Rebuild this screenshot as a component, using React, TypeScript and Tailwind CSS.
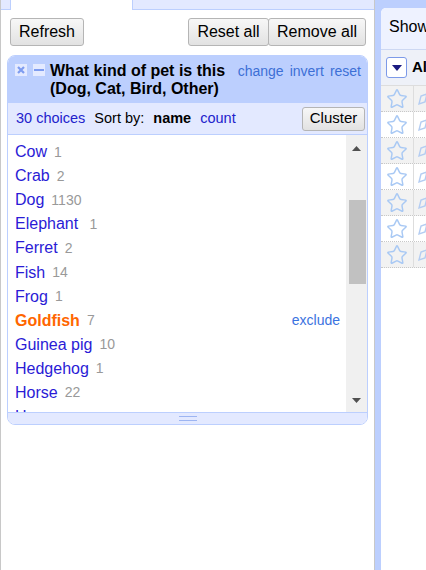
import React from "react";
import { Star } from "lucide-react";

const choices = [
  { name: "Cow", count: 1 },
  { name: "Crab", count: 2 },
  { name: "Dog", count: 1130 },
  { name: "Elephant\u00a0", count: 1 },
  { name: "Ferret", count: 2 },
  { name: "Fish", count: 14 },
  { name: "Frog", count: 1 },
  { name: "Goldfish", count: 7, selected: true },
  { name: "Guinea pig", count: 10 },
  { name: "Hedgehog", count: 1 },
  { name: "Horse", count: 22 },
  { name: "Human", count: 3 },
];

const Btn = ({ children, className = "" }: { children: React.ReactNode; className?: string }) => (
  <div
    className={`flex items-center justify-center h-[28px] border border-[#b5b5b5] rounded-[3px] bg-gradient-to-b from-[#f7f7f7] to-[#e2e2e2] text-[16px] text-black ${className}`}
  >
    {children}
  </div>
);

const FacetPanel = () => (
  <div className="ml-[6px] mt-[9px] w-[361px] border border-[#bccffe] rounded-[8px] overflow-hidden flex flex-col">
    {/* header */}
    <div className="h-[47px] bg-[#bccffe] flex pl-[7px] pt-[6px] pr-[6px]">
      <svg width="12" height="12" viewBox="0 0 12 12" className="mt-[2px] shrink-0">
        <rect width="12" height="12" fill="#e4eaff" />
        <path d="M3 3L9 9M9 3L3 9" stroke="#7e9cf0" strokeWidth="2.2" />
      </svg>
      <svg width="12" height="12" viewBox="0 0 12 12" className="mt-[2px] ml-[6px] shrink-0">
        <rect width="12" height="12" fill="#e4eaff" />
        <rect x="1" y="5" width="10" height="2" fill="#7e9cf0" />
      </svg>
      <div className="ml-[5px] w-[184px] text-[16px] font-bold leading-[18px] text-black">
        What kind of pet is this (Dog, Cat, Bird, Other)
      </div>
      <div className="ml-auto flex gap-[6px] text-[14px] leading-[18px] text-[#3d6fd6]">
        <span>change</span>
        <span>invert</span>
        <span>reset</span>
      </div>
    </div>

    {/* sub header */}
    <div className="h-[32px] bg-[#e3e9ff] border-b border-[#bccffe] flex items-center pl-[8px] pr-[2px] text-[14.5px]">
      <span className="text-[#2222cc]">30 choices</span>
      <span className="ml-[9px] text-black">Sort by:</span>
      <span className="ml-[9px] font-bold text-black">name</span>
      <span className="ml-[9px] text-[#2222cc]">count</span>
      <div className="ml-auto flex items-center justify-center h-[24px] w-[63px] border border-[#b5b5b5] rounded-[3px] bg-gradient-to-b from-[#f7f7f7] to-[#e2e2e2] text-[15px] text-black">
        Cluster
      </div>
    </div>

    {/* choices */}
    <div className="h-[277px] flex bg-white">
      <div className="flex-1 pl-[7px] pr-[6px] pt-[5px] overflow-hidden">
        {choices.map((c) => (
          <div key={c.name} className="h-[24.1px] flex items-center whitespace-pre">
            <span className={`text-[16px] ${c.selected ? "font-bold text-[#ff6600]" : "text-[#2a1bd6]"}`}>{c.name}</span>
            <span className="ml-[7px] text-[14px] text-[#999999]">{c.count}</span>
            {c.selected && <span className="ml-auto text-[14px] text-[#3b73e0]">exclude</span>}
          </div>
        ))}
      </div>
      <div className="w-[21px] bg-[#f0f0f0] flex flex-col items-center">
        <div className="h-[65px] w-full flex justify-center pt-[11px]">
          <svg width="9" height="5" viewBox="0 0 9 5">
            <path d="M4.5 0L9 5H0Z" fill="#505050" />
          </svg>
        </div>
        <div className="h-[84px] w-[17px] ml-[1px] bg-[#c1c1c1]" />
        <div className="flex-1" />
        <div className="pb-[9px]">
          <svg width="9" height="5" viewBox="0 0 9 5">
            <path d="M0 0H9L4.5 5Z" fill="#505050" />
          </svg>
        </div>
      </div>
    </div>

    {/* footer */}
    <div className="h-[12px] bg-[#e3e9ff] border-t border-[#bccffe] flex flex-col items-center justify-center gap-[3px]">
      <div className="w-[18px] h-px bg-[#9db5f2]" />
      <div className="w-[18px] h-px bg-[#9db5f2]" />
    </div>
  </div>
);

const DataPane = () => (
  <div className="flex-1 bg-[#bccffe] pl-[6px] pt-[8px] flex">
    <div className="flex-1 bg-white rounded-tl-[5px] overflow-hidden flex flex-col">
      <div className="h-[42px] bg-[#eef2ff] border-b border-[#cdd8f3] flex items-center pl-[8px] pb-[3px] text-[16px] text-black whitespace-nowrap">
        Show
      </div>
      <div className="h-[36px] bg-[#eef1f8] flex items-center pl-[5px] whitespace-nowrap border-b border-[#dddddd]">
        <div className="w-[21px] h-[21px] shrink-0 bg-white border border-[#7d9ae8] rounded-[3px] flex items-center justify-center">
          <svg width="10" height="6" viewBox="0 0 10 6">
            <path d="M0 0H10L5 6Z" fill="#1a1a80" />
          </svg>
        </div>
        <span className="ml-[5px] text-[15px] font-bold text-black">All</span>
      </div>
      {[0, 1, 2, 3, 4, 5, 6].map((i) => (
        <div
          key={i}
          className={`h-[26px] flex border-b border-dotted border-[#c8c8c8] ${i % 2 === 0 ? "bg-[#f2f2f2]" : "bg-white"}`}
        >
          <div className="w-[33px] shrink-0 border-r border-[#dddddd] flex items-center justify-center">
            <Star size={22} strokeWidth={1.6} color="#a9c9f4" />
          </div>
          <div className="flex items-center pl-[3px]">
            <svg width="12" height="14" viewBox="0 0 12 14">
              <path d="M2 12L4 4L10 2L8 10Z" fill="none" stroke="#b4cdf2" strokeWidth="1.4" />
            </svg>
          </div>
        </div>
      ))}
    </div>
  </div>
);

export default function App() {
  return (
    <div className="flex h-[570px] w-[426px] overflow-hidden bg-white font-['Liberation_Sans',Arial,sans-serif]">
      <div className="w-[375px] shrink-0 border-l border-r border-[#c8c8c8] flex flex-col">
        <div className="h-[10px] flex">
          <div className="w-[9px] bg-[#e3e9ff] border-b border-[#bccffe]" />
          <div className="w-[123px] bg-white border-x border-[#bccffe]" />
          <div className="flex-1 bg-[#e3e9ff] border-b border-[#bccffe]" />
        </div>
        <div className="mt-[8px] flex pl-[9px] pr-[8px]">
          <Btn className="w-[74px]">Refresh</Btn>
          <Btn className="ml-auto w-[81px]">Reset all</Btn>
          <Btn className="w-[98px] -ml-px">Remove all</Btn>
        </div>
        <FacetPanel />
      </div>
      <DataPane />
    </div>
  );
}
